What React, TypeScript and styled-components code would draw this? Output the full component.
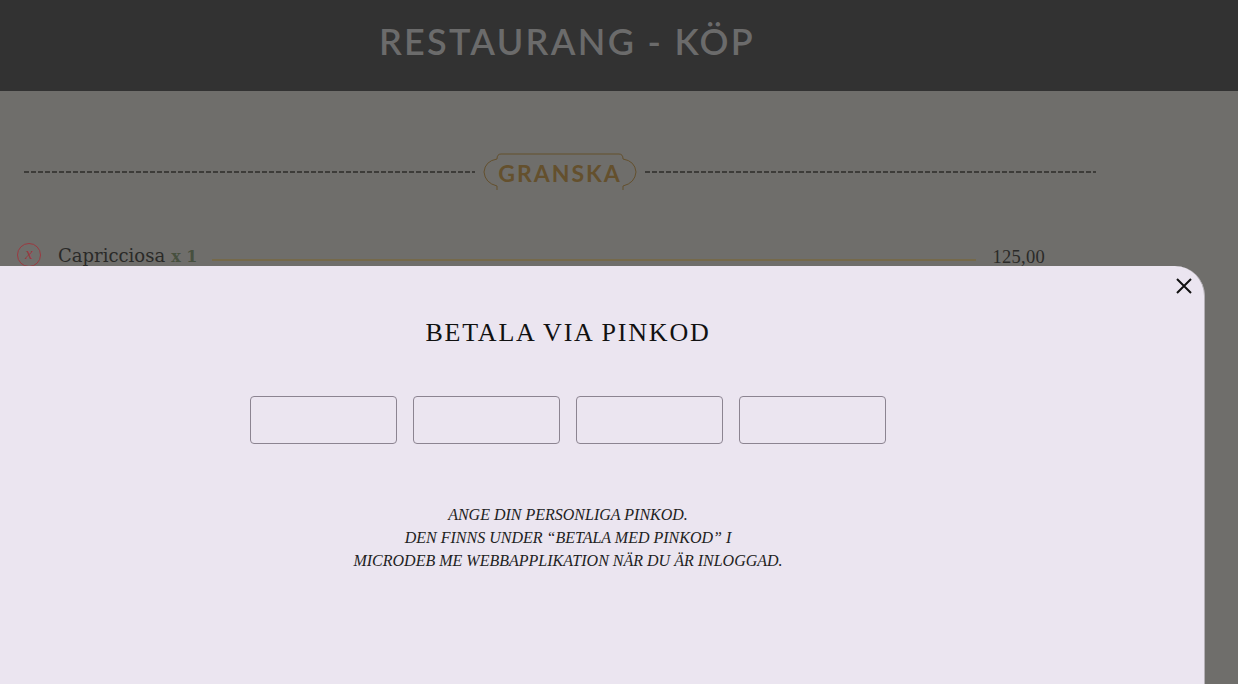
import { createGlobalStyle } from "styled-components";
import styled from "styled-components";

const GlobalStyle = createGlobalStyle`
  html, body {
    margin: 0;
    padding: 0;
    height: 100%;
    overflow: hidden;
    background: #6f6e6b;
  }
`;

const Page = styled.div`
  width: 1238px;
  height: 684px;
  position: relative;
  background: #6f6e6b;
`;

const Header = styled.header`
  height: 91px;
  background: #323232;
  display: flex;
  justify-content: center;
  align-items: center;
  width: 1134px;
  padding-right: 104px;
`;

const HeaderTitle = styled.h1`
  margin: 0 0 10px;
  font-family: Lato, "Open Sans", sans-serif;
  font-weight: 600;
  font-size: 36px;
  letter-spacing: 2.3px;
  color: #6b6b6b;
`;

const Content = styled.main`
  padding: 62px 0 0 0;
  width: 1096px;
`;

const Divider = styled.div`
  display: flex;
  align-items: center;
  gap: 8px;
  padding-left: 24px;
  height: 38px;
`;

const Dashes = styled.div`
  flex: 1;
  height: 2px;
  background-image: repeating-linear-gradient(
    to right,
    #3d3c39 0 5px,
    transparent 5px 7px
  );
`;

const Badge = styled.div`
  position: relative;
  width: 154px;
  height: 38px;
  display: flex;
  align-items: center;
  justify-content: center;
`;

const BadgeFrame = styled.svg`
  position: absolute;
  inset: 0;
`;

const BadgeText = styled.span`
  position: relative;
  font-family: Lato, "Open Sans", sans-serif;
  font-weight: 700;
  font-size: 23px;
  letter-spacing: 2px;
  color: #64502d;
  margin-top: 2px;
`;

const ItemRow = styled.div`
  display: flex;
  align-items: center;
  margin-top: 50px;
  padding-left: 17px;
  height: 28px;
`;

const RemoveBtn = styled.span`
  width: 24px;
  height: 24px;
  border: 1.5px solid #9b3940;
  border-radius: 50%;
  display: flex;
  align-items: center;
  justify-content: center;
  font-family: "Liberation Serif", serif;
  font-style: italic;
  font-size: 17px;
  color: #9b3940;
  line-height: 1;
  padding-bottom: 3px;
  box-sizing: border-box;
`;

const ItemName = styled.span`
  margin-left: 17px;
  font-family: "DejaVu Serif", "Liberation Serif", serif;
  font-size: 18px;
  color: #2a2a28;
`;

const Qty = styled.b`
  margin-left: 6px;
  font-family: "DejaVu Serif", serif;
  font-size: 16px;
  color: #47503f;
  margin-top: 2px;
`;

const Leader = styled.span`
  flex: 0 0 764px;
  margin-left: 15px;
  height: 2px;
  background: #75694a;
  margin-top: 10px;
`;

const Price = styled.span`
  margin-left: 16px;
  font-family: "Liberation Serif", serif;
  font-size: 18.5px;
  letter-spacing: 0.3px;
  color: #2a2a28;
  margin-top: 4px;
`;

const Sheet = styled.section`
  position: absolute;
  left: 0;
  top: 266px;
  width: 1205px;
  bottom: 0;
  box-sizing: border-box;
  background: #ebe5f0;
  border-top-right-radius: 30px;
  border-right: 1px solid #b4b0b6;
`;

const CloseBtn = styled.button`
  position: absolute;
  top: 11px;
  right: 11px;
  width: 18px;
  height: 18px;
  padding: 0;
  border: 0;
  background: none;
  display: flex;
`;

const SheetBody = styled.div`
  width: 1136px;
  display: flex;
  flex-direction: column;
  align-items: center;
  padding-top: 52px;
`;

const SheetTitle = styled.h2`
  margin: 0;
  font-family: "Liberation Serif", serif;
  font-weight: 400;
  font-size: 26px;
  letter-spacing: 1.8px;
  color: #111;
`;

const PinRow = styled.div`
  display: flex;
  gap: 16px;
  margin-top: 48px;
`;

const PinBox = styled.input`
  width: 147px;
  height: 48px;
  box-sizing: border-box;
  border: 1.5px solid #8c8491;
  border-radius: 4px;
  background: transparent;
  outline: none;
`;

const Hint = styled.p`
  margin: 59px 0 0;
  text-align: center;
  font-family: "Liberation Serif", serif;
  font-style: italic;
  font-size: 16px;
  line-height: 23px;
  color: #222;
`;

export default function App() {
  return (
    <Page>
      <GlobalStyle />
      <Header>
        <HeaderTitle>RESTAURANG - KÖP</HeaderTitle>
      </Header>
      <Content>
        <Divider>
          <Dashes />
          <Badge>
            <BadgeFrame width="154" height="38" viewBox="0 0 154 38" fill="none">
              <path
                d="M14 37 V33 Q2 30 1 19 Q2 8 14 6 Q14 1 18 1 H136 Q140 1 140 6 Q152 8 153 19 Q152 30 140 33 V37"
                stroke="#64502d"
                strokeWidth="1"
              />
            </BadgeFrame>
            <BadgeText>GRANSKA</BadgeText>
          </Badge>
          <Dashes />
        </Divider>
        <ItemRow>
          <RemoveBtn>x</RemoveBtn>
          <ItemName>Capricciosa</ItemName>
          <Qty>x 1</Qty>
          <Leader />
          <Price>125,00</Price>
        </ItemRow>
      </Content>
      <Sheet>
        <CloseBtn aria-label="Stäng">
          <svg width="18" height="18" viewBox="0 0 18 18">
            <path d="M2 2 L16 16 M16 2 L2 16" stroke="#111" strokeWidth="2" />
          </svg>
        </CloseBtn>
        <SheetBody>
          <SheetTitle>BETALA VIA PINKOD</SheetTitle>
          <PinRow>
            <PinBox type="password" />
            <PinBox type="password" />
            <PinBox type="password" />
            <PinBox type="password" />
          </PinRow>
          <Hint>
            ANGE DIN PERSONLIGA PINKOD.
            <br />
            DEN FINNS UNDER “BETALA MED PINKOD” I
            <br />
            MICRODEB ME WEBBAPPLIKATION NÄR DU ÄR INLOGGAD.
          </Hint>
        </SheetBody>
      </Sheet>
    </Page>
  );
}
